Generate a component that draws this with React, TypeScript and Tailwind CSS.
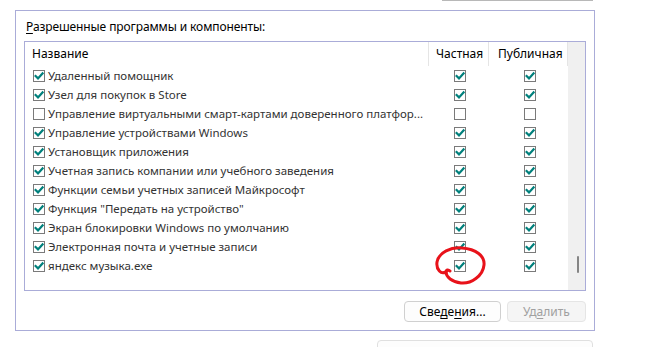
import React from 'react';

type Row = { name: string; on: boolean; priv: boolean; pub: boolean };

const ROWS: Row[] = [
  { name: 'Удаленный помощник', on: true, priv: true, pub: true },
  { name: 'Узел для покупок в Store', on: true, priv: true, pub: true },
  { name: 'Управление виртуальными смарт-картами доверенного платфор...', on: false, priv: false, pub: false },
  { name: 'Управление устройствами Windows', on: true, priv: true, pub: true },
  { name: 'Установщик приложения', on: true, priv: true, pub: true },
  { name: 'Учетная запись компании или учебного заведения', on: true, priv: true, pub: true },
  { name: 'Функции семьи учетных записей Майкрософт', on: true, priv: true, pub: true },
  { name: 'Функция "Передать на устройство"', on: true, priv: true, pub: true },
  { name: 'Экран блокировки Windows по умолчанию', on: true, priv: true, pub: true },
  { name: 'Электронная почта и учетные записи', on: true, priv: true, pub: true },
  { name: 'яндекс музыка.exe', on: true, priv: true, pub: true },
];

function Check({ checked }: { checked: boolean }) {
  return (
    <div className="w-[12px] h-[12px] border border-[#7a7a7a] bg-white shrink-0 flex items-center justify-center">
      {checked && (
        <svg width="10" height="10" viewBox="0 0 10 10">
          <path d="M1.6 5 L4 7.4 L8.6 2.4" fill="none" stroke="#00807c" strokeWidth="2.2" strokeLinecap="square" />
        </svg>
      )}
    </div>
  );
}

export default function App() {
  return (
    <div
      className="relative w-[654px] h-[347px] overflow-hidden bg-white text-[12px] text-black flex flex-col"
      style={{ fontFamily: '"Noto Sans", "Open Sans", sans-serif' }}
    >
      {/* bottom edge of the button above */}
      <div className="ml-[442px] w-[151px] h-px bg-[#b8b8b8] shrink-0" />

      {/* group box */}
      <div className="ml-[15px] mt-[9px] w-[580px] h-[321px] border border-[#aaacd8] shrink-0 flex flex-col">
        <div className="pl-[10px] pt-[8px] h-[24px] leading-[16px] tracking-[-0.1px]">
          <span className="underline underline-offset-2">Р</span>азрешенные программы и компоненты:
        </div>

        {/* list view */}
        <div className="ml-[8px] mt-[6px] w-[562px] h-[250px] border border-[#aaacd8] flex">
          <div className="w-[543px] flex flex-col">
            <div className="h-[24px] flex items-center shrink-0">
              <div className="w-[404px] h-full border-r border-[#e5e5e5] pl-[7px] flex items-center">Название</div>
              <div className="w-[60px] h-full border-r border-[#e5e5e5] pl-[7px] flex items-center">Частная</div>
              <div className="w-[79px] h-full border-r border-[#e5e5e5] pl-[9px] flex items-center">Публичная</div>
            </div>
            {ROWS.map((r) => (
              <div key={r.name} className="h-[19px] flex items-center text-[#333333]">
                <div className="w-[404px] pl-[8px] flex items-center gap-[3px] whitespace-nowrap">
                  <Check checked={r.on} />
                  <span className="text-[11.5px]">{r.name}</span>
                </div>
                <div className="w-[60px] pl-[25px]">
                  <Check checked={r.priv} />
                </div>
                <div className="w-[79px] pl-[35px]">
                  <Check checked={r.pub} />
                </div>
              </div>
            ))}
          </div>
          <div className="w-[17px] h-full bg-[#f0f0f0]">
            <div className="ml-[9px] mt-[214px] w-[2px] h-[17px] rounded-full bg-[#858585]" />
          </div>
        </div>

        <div className="mt-[10px] mr-[8px] flex justify-end gap-[6px]">
          <button className="w-[97px] h-[21px] rounded-[4px] border border-[#d0d0d0] bg-[#fdfdfd] text-[12px] leading-none">
            Све<span className="underline underline-offset-2">д</span>е<span className="underline underline-offset-2">н</span>ия...
          </button>
          <button className="w-[79px] h-[21px] rounded-[4px] border border-[#e5e5e5] bg-[#f5f5f5] text-[12px] leading-none text-[#a0a0a0]">
            Уд<span className="underline underline-offset-2">а</span>лить
          </button>
        </div>
      </div>

      {/* top of the button below */}
      <div className="ml-[377px] mt-[9px] w-[216px] h-[22px] rounded-t-[4px] border border-[#e0e0e0] bg-[#fdfdfd] pl-[15px] pt-[4px] leading-[14px] shrink-0">
        Разрешить другое приложение...
      </div>

      {/* red hand-drawn annotation */}
      <svg className="absolute left-0 top-0 pointer-events-none" width="654" height="347">
        <path
          d="M447 271 C441 276 436 269 437 262 C439 252 451 247 462 248 C476 249 485 256 484 265 C483 276 471 284 461 283 C452 282 446 277 446 272 C446 270 448 269 450 271"
          fill="none"
          stroke="#e8121a"
          strokeWidth="3"
          strokeLinecap="round"
        />
      </svg>
    </div>
  );
}
